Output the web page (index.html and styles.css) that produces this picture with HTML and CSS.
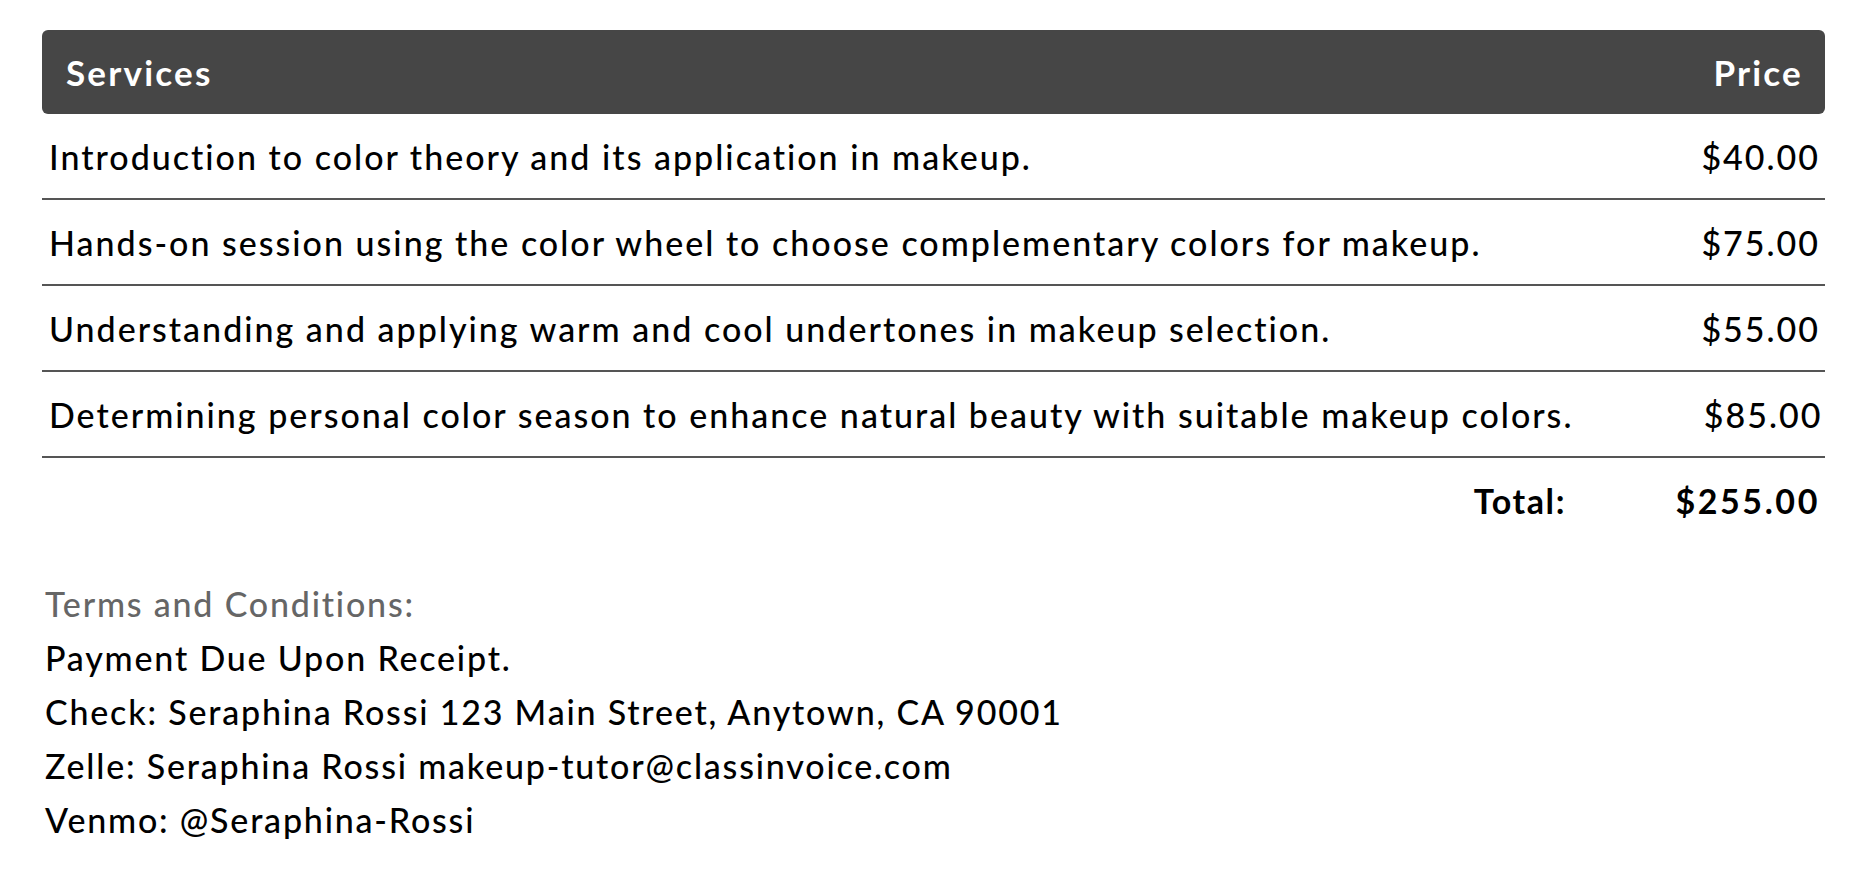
FILE: index.html
```html
<!DOCTYPE html>
<html>
<head>
<meta charset="utf-8">
<link rel="stylesheet" href="styles.css">
</head>
<body>
<div class="page">
  <div class="table">
    <div class="head">
      <div class="h-desc">Services</div>
      <div class="h-price">Price</div>
    </div>
    <div class="row">
      <div class="desc">Introduction to color theory and its application in makeup.</div>
      <div class="price">$40.00</div>
    </div>
    <div class="row">
      <div class="desc">Hands-on session using the color wheel to choose complementary colors for makeup.</div>
      <div class="price">$75.00</div>
    </div>
    <div class="row">
      <div class="desc">Understanding and applying warm and cool undertones in makeup selection.</div>
      <div class="price">$55.00</div>
    </div>
    <div class="row">
      <div class="desc">Determining personal color season to enhance natural beauty with suitable makeup colors.</div>
      <div class="price">$85.00</div>
    </div>
    <div class="total">
      <div class="t-label">Total:</div>
      <div class="t-value">$255.00</div>
    </div>
  </div>
  <div class="terms">
    <div class="terms-title">Terms and Conditions:</div>
    <div class="line">Payment Due Upon Receipt.</div>
    <div class="line">Check: Seraphina Rossi 123 Main Street, Anytown, CA 90001</div>
    <div class="line">Zelle: Seraphina Rossi makeup-tutor@classinvoice.com</div>
    <div class="line">Venmo: @Seraphina-Rossi</div>
  </div>
</div>
</body>
</html>
```

FILE: styles.css
```css
html, body {
  margin: 0;
  padding: 0;
  background: #fff;
}
body {
  font-family: Lato, "Open Sans", sans-serif;
  color: #000;
}
.page {
  padding: 30px 43px 0 42px;
}
.table {
  display: flex;
  flex-direction: column;
}
.head {
  display: grid;
  grid-template-columns: 1fr 254px;
  align-items: center;
  height: 84px;
  background: #464646;
  border-radius: 6px;
  color: #fff;
  font-weight: 700;
  font-size: 35px;
  letter-spacing: 2.2px;
  padding: 0 22px 0 24px;
}
.h-price {
  text-align: right;
}
.row {
  display: grid;
  grid-template-columns: 1fr 254px;
  align-items: center;
  height: 84px;
  border-bottom: 2px solid #555;
  font-size: 34px;
  font-weight: 500;
  letter-spacing: 2px;
}
.desc {
  padding-left: 7px;
  white-space: nowrap;
}
.price {
  text-align: right;
  padding-right: 5px;
}
.total {
  display: grid;
  grid-template-columns: 1fr 254px;
  align-items: center;
  height: 84px;
  font-size: 34px;
  font-weight: 700;
}
.t-label {
  text-align: right;
  padding-right: 5px;
  letter-spacing: 1.6px;
}
.t-value {
  text-align: right;
  padding-right: 5px;
  letter-spacing: 2.6px;
}
.terms {
  margin-top: 35px;
  padding-left: 3px;
  font-size: 34px;
  font-weight: 500;
  line-height: 54px;
  letter-spacing: 1.8px;
}
.terms-title {
  color: #666;
}
```
